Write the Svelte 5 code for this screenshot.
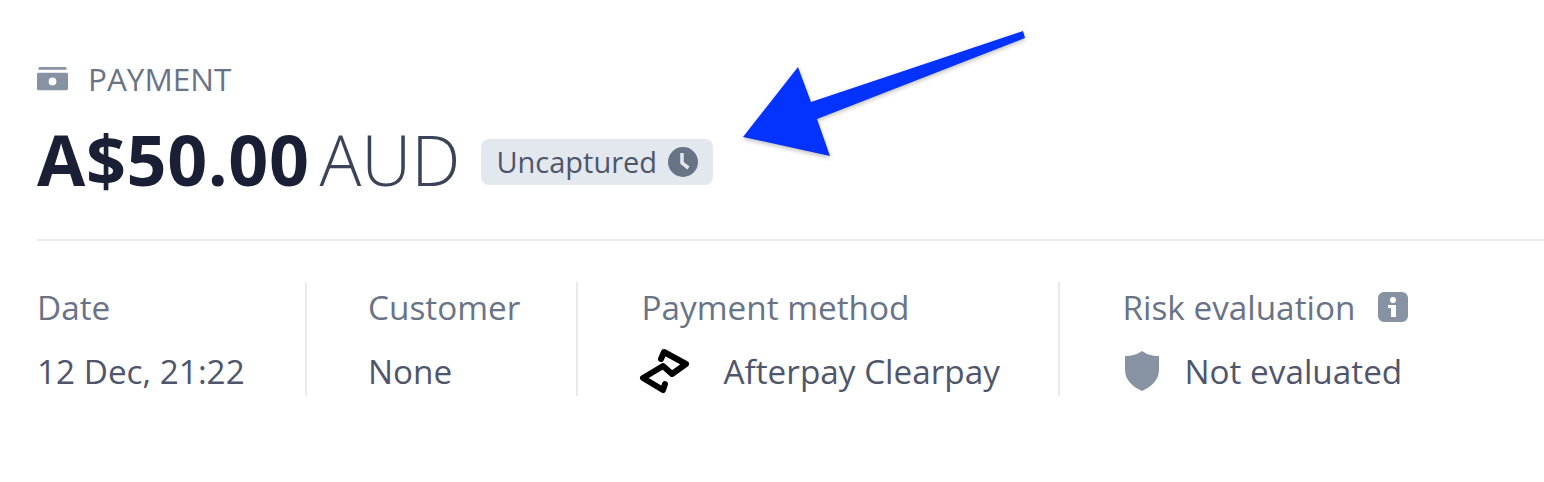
<script lang="ts">
    const columns = [
        { label: "Date", value: "12 Dec, 21:22" },
        { label: "Customer", value: "None" },
        { label: "Payment method", value: "Afterpay Clearpay", icon: "afterpay" },
        { label: "Risk evaluation", value: "Not evaluated", icon: "shield", info: true },
    ];
</script>

<div class="page">
    <section class="summary">
        <div class="eyebrow">
            <svg class="cash" viewBox="0 0 32 24" aria-hidden="true">
                <path d="M3 0h26a1.500 1.500 0 0 1 1.500 1.500V3h-29V1.500A1.500 1.500 0 0 1 3 0z" />
                <path
                    fill-rule="evenodd"
                    d="M0 7.500A1.500 1.500 0 0 1 1.500 6h29A1.500 1.500 0 0 1 32 7.500v15a1.500 1.500 0 0 1-1.500 1.500h-29A1.500 1.500 0 0 1 0 22.500zM16 11a4 4 0 1 0 0 8 4 4 0 0 0 0-8z"
                />
            </svg>
            <span>PAYMENT</span>
        </div>

        <div class="amount-row">
            <span class="amount">A$50.00</span>
            <span class="currency">AUD</span>
            <span class="badge">
                Uncaptured
                <svg class="clock" viewBox="0 0 30 30" aria-hidden="true">
                    <circle cx="15" cy="15" r="15" />
                    <path d="M14 6v10l6.500 5" fill="none" stroke="#e3e8ee" stroke-width="3.500" />
                </svg>
            </span>
        </div>
    </section>

    <div class="details">
        {#each columns as col}
            <div class="col">
                <div class="label">
                    {col.label}
                    {#if col.info}
                        <svg class="info" viewBox="0 0 30 30" aria-hidden="true">
                            <path
                                fill-rule="evenodd"
                                d="M6 0h18a6 6 0 0 1 6 6v18a6 6 0 0 1-6 6H6a6 6 0 0 1-6-6V6a6 6 0 0 1 6-6zm9 5a3 3 0 1 0 0 6 3 3 0 0 0 0-6zm-5 8v3h3v9h5V13z"
                            />
                        </svg>
                    {/if}
                </div>
                <div class="value">
                    {#if col.icon === "afterpay"}
                        <svg class="afterpay" viewBox="0 0 51 46" aria-hidden="true">
                            <path
                                d="M22 11 25 4 47 16 33 26 24 18 4 30 24 42 26 36"
                                fill="none"
                                stroke="#000"
                                stroke-width="6"
                                stroke-linecap="round"
                                stroke-linejoin="round"
                            />
                        </svg>
                    {:else if col.icon === "shield"}
                        <svg class="shield" viewBox="0 0 34 40" aria-hidden="true">
                            <path d="M17 0 C21 3 27 5 34 5 V19 C34 29 26 36 17 40 C8 36 0 29 0 19 V5 C7 5 13 3 17 0z" />
                        </svg>
                    {/if}
                    <span>{col.value}</span>
                </div>
            </div>
        {/each}
    </div>

    <svg class="arrow" viewBox="0 0 1544 482" aria-hidden="true">
        <polygon
            points="743,137 798,67 811,102 1023,31 1025,38 817,119 830,156"
            fill="#0432ff"
        />
    </svg>
</div>

<style>
    :global(body) {
        background: #fff;
    }
    .page {
        position: relative;
        box-sizing: border-box;
        width: 1544px;
        height: 482px;
        padding: 60px 0 0 37px;
        overflow: hidden;
        font-family: "Open Sans", "Noto Sans", sans-serif;
        color: #4f566b;
    }
    .summary {
        border-bottom: 2px solid #e8eaee;
        height: 179px;
    }
    .eyebrow {
        display: flex;
        align-items: center;
        gap: 20px;
        height: 36px;
        font-size: 31.500px;
        font-weight: 500;
        color: #697386;
    }
    .cash {
        width: 31px;
        height: 25px;
        fill: #8792a2;
    }
    .amount-row {
        display: flex;
        align-items: center;
        margin-top: 28px;
        height: 70px;
    }
    .amount {
        font-size: 70px;
        font-weight: 700;
        letter-spacing: 0.6px;
        color: #1a1f36;
    }
    .currency {
        margin-left: 10px;
        font-size: 69.500px;
        font-weight: 300;
        color: #3c4257;
    }
    .badge {
        display: inline-flex;
        align-items: center;
        gap: 11px;
        height: 46px;
        margin: 5px 0 0 21px;
        padding: 0 15px;
        border-radius: 8px;
        background: #e3e8ee;
        font-size: 29px;
        color: #4f566b;
    }
    .clock {
        width: 30px;
        height: 30px;
        fill: #697386;
    }
    .details {
        display: grid;
        grid-template-columns: 268px 271px 482px 1fr;
        margin-top: 41px;
    }
    .col {
        box-sizing: border-box;
        height: 114px;
        padding-left: 62.500px;
        border-left: 2px solid #e8eaee;
    }
    .col:first-child {
        padding-left: 0;
        border-left: none;
    }
    .col:nth-child(2) {
        padding-left: 61px;
    }
    .col:nth-child(3) {
        padding-left: 63.500px;
    }
    .label {
        display: flex;
        align-items: center;
        gap: 23px;
        height: 50px;
        font-size: 33.300px;
        color: #697386;
        white-space: nowrap;
    }
    .value {
        display: flex;
        align-items: center;
        gap: 24px;
        height: 50px;
        margin-top: 14px;
        font-size: 33.300px;
        color: #4f566b;
        white-space: nowrap;
    }
    .info {
        width: 30px;
        height: 30px;
        fill: #8792a2;
    }
    .afterpay {
        width: 51px;
        height: 46px;
        margin: 0 10px 0 -3px;
    }
    .shield {
        width: 34px;
        height: 40px;
        margin: 0 2px;
        fill: #8792a2;
    }
    .arrow {
        position: absolute;
        inset: 0;
        width: 1544px;
        height: 482px;
        filter: drop-shadow(0 2px 2px rgba(0, 0, 0, 0.25));
    }
</style>
